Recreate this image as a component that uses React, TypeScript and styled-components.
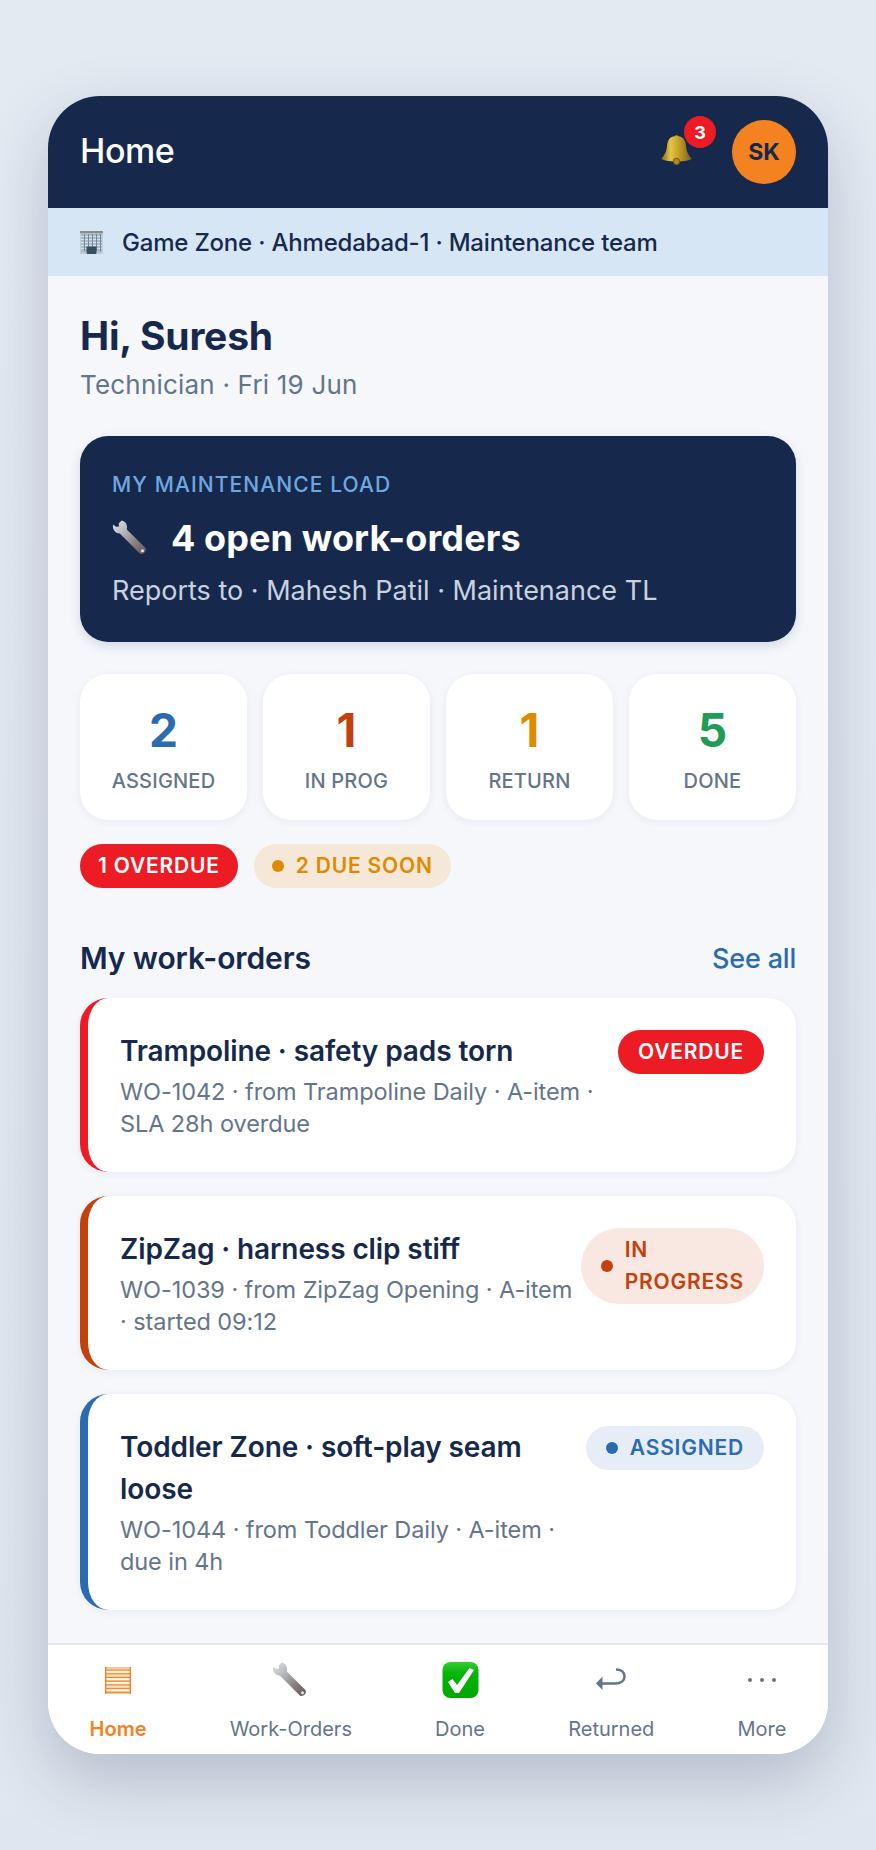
import React from "react"
import styled, { createGlobalStyle } from "styled-components"

const navy = "#16294d"
const slate = "#64748b"
const orange = "#f58220"
const red = "#ed1c24"
const blue = "#2b6cb0"
const rust = "#c2410c"
const amber = "#e08a00"
const green = "#1f9d55"

const GlobalStyle = createGlobalStyle`
  html, body {
    margin: 0;
    padding: 0;
  }

  body {
    background: #e2e8f0;
    font-family: Inter, "Noto Sans", sans-serif;
    color: ${navy};
  }
`

// Icons
const WrenchIcon = ({ id }: { id: string }) => (
  <svg width="37" height="36" viewBox="0 0 37 36">
    <defs>
      <linearGradient id={id} x1="0" y1="0" x2="1" y2="1">
        <stop offset="0" stopColor="#dfe3e8" />
        <stop offset="0.35" stopColor="#b4b5ba" />
        <stop offset="0.7" stopColor="#85797a" />
        <stop offset="1" stopColor="#6a5656" />
      </linearGradient>
    </defs>
    <path
      d="M9.7 0.5 L6.8 3.2 L7 6.5 L4 6.8 L1 4.5 C0.3 9 2.5 13.2 7.8 13.6 L27.5 33.2 C30.5 36 36 31 33.2 27.8 L14.8 9.5 C15.8 5 14 1.5 9.7 0.5Z"
      fill={`url(#${id})`}
    />
    <circle cx="30.5" cy="30.7" r="1.5" fill="#e8e8e8" />
  </svg>
)

const BellIcon = () => (
  <svg width="31" height="31" viewBox="0 0 31 31">
    <defs>
      <linearGradient id="bell" x1="0" y1="0" x2="1" y2="0">
        <stop offset="0" stopColor="#8a6a12" />
        <stop offset="0.3" stopColor="#e3c445" />
        <stop offset="0.55" stopColor="#c9a42c" />
        <stop offset="1" stopColor="#7d5f10" />
      </linearGradient>
    </defs>
    <circle cx="15.5" cy="2" r="2" fill="#a8861f" />
    <path
      d="M15.5 1 C9 1 6.5 5 6 11 C5.5 17 3.5 20 0.5 23.5 C0 25 7 26.5 15.5 26.5 C24 26.5 31 25 30.5 23.5 C27.5 20 25.5 17 25 11 C24.5 5 22 1 15.5 1Z"
      fill="url(#bell)"
    />
    <circle cx="15.5" cy="26.5" r="3.2" fill="#b08a20" stroke="#6e5410" />
  </svg>
)

const BuildingIcon = () => (
  <svg width="23" height="23" viewBox="0 0 23 23">
    <rect x="0" y="0" width="23" height="2.4" fill="#8f8b88" />
    <rect x="0.5" y="2.4" width="22" height="20.6" fill="#a8bccb" />
    {[5, 8, 11, 14, 17].map(y => (
      <rect key={y} x="1" y={y} width="21" height="1" fill="#dbe3e8" />
    ))}
    {[4, 8, 12, 16, 20].map(x => (
      <rect key={x} x={x} y="3" width="1" height="17" fill="#6f8798" />
    ))}
    <rect x="6.5" y="15.5" width="10" height="7.5" fill="#37505f" />
    <rect x="0.5" y="21.5" width="6" height="1.5" fill="#c9cdd0" />
    <rect x="16.5" y="21.5" width="6" height="1.5" fill="#c9cdd0" />
  </svg>
)

const CheckIcon = () => (
  <svg width="37" height="36" viewBox="0 0 36 36">
    <defs>
      <linearGradient id="check" x1="0" y1="0" x2="0" y2="1">
        <stop offset="0" stopColor="#35cc35" />
        <stop offset="0.3" stopColor="#08b408" />
        <stop offset="1" stopColor="#00a800" />
      </linearGradient>
    </defs>
    <rect width="36" height="36" rx="8" fill="url(#check)" />
    <path d="M5.5 20 L10 17 L14.5 23 L27 6 L31.5 8 L16.5 31 L12.5 31Z" fill="#fff" />
  </svg>
)

const HomeGlyph = () => (
  <svg width="26" height="27" viewBox="0 0 26 27">
    <rect x="0" y="0" width="26" height="27" fill="#fbc89a" />
    {[3, 6.7, 10.4, 14.1, 17.8, 21.5].map(y => (
      <rect key={y} x="1" y={y} width="24" height="2.7" fill="#fff" opacity={y === 6.7 || y === 17.8 ? 0.45 : 0.95} />
    ))}
    {[2.6, 6.3, 10, 13.7, 17.4, 21.1, 24.8].map(y => (
      <rect key={y} x="0" y={y} width="26" height="1.1" fill={orange} />
    ))}
    <rect x="0" y="0" width="1.4" height="27" fill={orange} />
    <rect x="24.6" y="0" width="1.4" height="27" fill={orange} />
  </svg>
)

const ReturnIcon = () => (
  <svg width="30" height="24" viewBox="0 0 30 24">
    <path d="M0 15.5 L6.5 8.5 V22 Z" fill={slate} />
    <path d="M5 15.5 H19 C25 15.5 28.5 12.5 28.5 8.5 C28.5 4 25 1.5 20 1.5" fill="none" stroke={slate} strokeWidth="2.6" />
  </svg>
)

const DotsIcon = () => (
  <svg width="30" height="6" viewBox="0 0 30 6">
    <circle cx="3" cy="3" r="2" fill={slate} />
    <circle cx="15" cy="3" r="2" fill={slate} />
    <circle cx="27" cy="3" r="2" fill={slate} />
  </svg>
)

// Data
const stats = [
  { value: "2", label: "ASSIGNED", color: blue },
  { value: "1", label: "IN PROG", color: rust },
  { value: "1", label: "RETURN", color: amber },
  { value: "5", label: "DONE", color: green },
]

const tabs = [
  { label: "Home", icon: <HomeGlyph />, active: true },
  { label: "Work-Orders", icon: <WrenchIcon id="tab-wrench" /> },
  { label: "Done", icon: <CheckIcon /> },
  { label: "Returned", icon: <ReturnIcon /> },
  { label: "More", icon: <DotsIcon /> },
]

const App: React.FC = () => {
  return (
    <Page>
      <GlobalStyle />
      <Phone>
        <Header>
          <HeaderTitle>Home</HeaderTitle>
          <HeaderActions>
            <BellWrap>
              <BellIcon />
              <Badge>3</Badge>
            </BellWrap>
            <Avatar>SK</Avatar>
          </HeaderActions>
        </Header>

        <ContextBar>
          <BuildingIcon />
          <span>Game Zone · Ahmedabad-1 · Maintenance team</span>
        </ContextBar>

        <Content>
          <Greeting>Hi, Suresh</Greeting>
          <Subtitle>Technician · Fri 19 Jun</Subtitle>

          <Hero>
            <HeroLabel>MY MAINTENANCE LOAD</HeroLabel>
            <HeroTitle>
              <WrenchIcon id="hero-wrench" />
              <span>4 open work-orders</span>
            </HeroTitle>
            <HeroMeta>Reports to · Mahesh Patil · Maintenance TL</HeroMeta>
          </Hero>

          <StatGrid>
            {stats.map(stat => (
              <StatCard key={stat.label}>
                <StatValue $color={stat.color}>{stat.value}</StatValue>
                <StatLabel>{stat.label}</StatLabel>
              </StatCard>
            ))}
          </StatGrid>

          <ChipRow>
            <Pill $bg={red} $fg="#fff">1 OVERDUE</Pill>
            <Pill $bg="#f5e8d8" $fg={amber}>
              <Dot />2 DUE SOON
            </Pill>
          </ChipRow>

          <SectionHead>
            <SectionTitle>My work-orders</SectionTitle>
            <SeeAll>See all</SeeAll>
          </SectionHead>

          <OrderList>
            <OrderCard $accent={red}>
              <OrderBody>
                <OrderTitle>Trampoline · safety pads torn</OrderTitle>
                <OrderMeta>
                  WO-1042 · from Trampoline Daily · A-item ·<br />
                  SLA 28h overdue
                </OrderMeta>
              </OrderBody>
              <Pill $bg={red} $fg="#fff">OVERDUE</Pill>
            </OrderCard>

            <OrderCard $accent={rust}>
              <OrderBody>
                <OrderTitle>ZipZag · harness clip stiff</OrderTitle>
                <OrderMeta>
                  WO-1039 · from ZipZag Opening · A-item<br />
                  · started 09:12
                </OrderMeta>
              </OrderBody>
              <Pill $bg="#f9e7e1" $fg={rust}>
                <Dot />
                <span>
                  IN<br />
                  PROGRESS
                </span>
              </Pill>
            </OrderCard>

            <OrderCard $accent={blue}>
              <OrderBody>
                <OrderTitle>
                  Toddler Zone · soft-play seam<br />
                  loose
                </OrderTitle>
                <OrderMeta>
                  WO-1044 · from Toddler Daily · A-item ·<br />
                  due in 4h
                </OrderMeta>
              </OrderBody>
              <Pill $bg="#e6edf6" $fg={blue}>
                <Dot />ASSIGNED
              </Pill>
            </OrderCard>
          </OrderList>
        </Content>

        <TabBar>
          {tabs.map(tab => (
            <Tab key={tab.label} $active={tab.active}>
              <TabIcon>{tab.icon}</TabIcon>
              <span>{tab.label}</span>
            </Tab>
          ))}
        </TabBar>
      </Phone>
    </Page>
  )
}

const Page = styled.div`
  display: flex;
  justify-content: center;
  box-sizing: border-box;
  height: 1850px;
  padding-top: 96px;
  background: linear-gradient(180deg, #e4eaf2 0%, #dfe6ef 100%);
  overflow: hidden;
`

const Phone = styled.div`
  display: flex;
  flex-direction: column;
  width: 780px;
  height: 1658px;
  border-radius: 52px;
  overflow: hidden;
  background: #f5f7fb;
  box-shadow: 0 24px 64px rgba(22, 41, 77, 0.22);
`

const Header = styled.header`
  display: flex;
  justify-content: space-between;
  align-items: center;
  height: 112px;
  padding: 0 32px;
  background: ${navy};
`

const HeaderTitle = styled.h1`
  margin: 0 0 4px;
  font-size: 34px;
  font-weight: 500;
  letter-spacing: -0.4px;
  color: #fff;
`

const HeaderActions = styled.div`
  display: flex;
  align-items: center;
  gap: 40px;
`

const BellWrap = styled.div`
  position: relative;
  display: flex;
  width: 31px;
  height: 31px;
  margin-bottom: 3px;
`

const Badge = styled.span`
  position: absolute;
  top: -19px;
  right: -24px;
  display: flex;
  justify-content: center;
  align-items: center;
  width: 32px;
  height: 32px;
  border-radius: 50%;
  background: ${red};
  color: #fff;
  font-size: 18px;
  font-weight: 700;
`

const Avatar = styled.div`
  display: flex;
  justify-content: center;
  align-items: center;
  width: 64px;
  height: 64px;
  border-radius: 50%;
  background: ${orange};
  color: ${navy};
  font-size: 23px;
  font-weight: 700;
`

const ContextBar = styled.div`
  display: flex;
  align-items: center;
  gap: 19px;
  height: 68px;
  padding: 0 32px;
  background: #d6e6f5;
  font-size: 24px;
  font-weight: 500;
  letter-spacing: -0.2px;
`

const Content = styled.main`
  flex: 1;
  padding: 36px 32px 32px;
`

const Greeting = styled.h2`
  margin: 0;
  font-size: 39px;
  line-height: 48px;
  font-weight: 700;
  letter-spacing: -0.2px;
`

const Subtitle = styled.p`
  margin: 7px 0 0;
  font-size: 26px;
  line-height: 36px;
  color: ${slate};
  letter-spacing: 0.2px;
`

const Hero = styled.section`
  margin-top: 33px;
  padding: 36px 32px;
  height: 206px;
  box-sizing: border-box;
  border-radius: 28px;
  background: ${navy};
  box-shadow: 0 4px 12px rgba(22, 41, 77, 0.14);
`

const HeroLabel = styled.div`
  font-size: 21px;
  line-height: 26px;
  font-weight: 500;
  letter-spacing: 1.1px;
  color: #6fa8e0;
`

const HeroTitle = styled.div`
  display: flex;
  align-items: center;
  gap: 22px;
  margin-top: 18px;
  font-size: 36px;
  line-height: 44px;
  font-weight: 700;
  letter-spacing: 0.1px;
  color: #fff;
`

const HeroMeta = styled.div`
  margin-top: 13px;
  font-size: 27px;
  line-height: 36px;
  color: #c9d2e0;
`

const StatGrid = styled.div`
  display: grid;
  grid-template-columns: repeat(4, 1fr);
  gap: 16px;
  margin-top: 32px;
`

const StatCard = styled.div`
  display: flex;
  flex-direction: column;
  align-items: center;
  height: 146px;
  padding-top: 28px;
  box-sizing: border-box;
  border-radius: 28px;
  background: #fff;
  box-shadow: 0 2px 8px rgba(22, 41, 77, 0.06);
`

const StatValue = styled.div<{ $color: string }>`
  font-size: 46px;
  line-height: 56px;
  font-weight: 700;
  color: ${p => p.$color};
`

const StatLabel = styled.div`
  margin-top: 10px;
  font-size: 20px;
  line-height: 26px;
  font-weight: 500;
  letter-spacing: 0.2px;
  color: ${slate};
`

const ChipRow = styled.div`
  display: flex;
  gap: 16px;
  margin-top: 24px;
`

const Pill = styled.span<{ $bg: string; $fg: string }>`
  display: inline-flex;
  align-items: center;
  flex-shrink: 0;
  align-self: flex-start;
  gap: 12px;
  padding: 6px 18px;
  border-radius: 40px;
  background: ${p => p.$bg};
  color: ${p => p.$fg};
  font-size: 21px;
  line-height: 32px;
  font-weight: 600;
  letter-spacing: 0.8px;
`

const Dot = styled.i`
  flex-shrink: 0;
  width: 12px;
  height: 12px;
  border-radius: 50%;
  background: currentColor;
`

const SectionHead = styled.div`
  display: flex;
  justify-content: space-between;
  align-items: center;
  margin-top: 51px;
`

const SectionTitle = styled.h3`
  margin: 0;
  font-size: 30px;
  line-height: 38px;
  font-weight: 600;
  letter-spacing: -0.1px;
`

const SeeAll = styled.a`
  font-size: 27px;
  font-weight: 500;
  letter-spacing: -0.2px;
  color: ${blue};
`

const OrderList = styled.div`
  display: flex;
  flex-direction: column;
  gap: 24px;
  margin-top: 21px;
`

const OrderCard = styled.article<{ $accent: string }>`
  display: flex;
  justify-content: space-between;
  align-items: flex-start;
  gap: 8px;
  padding: 32px;
  border-left: 8px solid ${p => p.$accent};
  border-radius: 28px;
  background: #fff;
  box-shadow: 0 2px 8px rgba(22, 41, 77, 0.06);

  ${Pill} {
    padding: 6px 20px;
  }
`

const OrderBody = styled.div`
  min-width: 0;
  white-space: nowrap;
`

const OrderTitle = styled.div`
  font-size: 28px;
  line-height: 42px;
  font-weight: 600;
  letter-spacing: -0.1px;
`

const OrderMeta = styled.div`
  margin-top: 4px;
  font-size: 23.5px;
  line-height: 32px;
  letter-spacing: -0.08px;
  color: ${slate};
`

const TabBar = styled.nav`
  display: flex;
  justify-content: space-around;
  height: 111px;
  box-sizing: border-box;
  padding-top: 16px;
  border-top: 2px solid #e4e9f1;
  background: #fff;
`

const Tab = styled.a<{ $active?: boolean }>`
  display: flex;
  flex-direction: column;
  align-items: center;
  gap: 17px;
  font-size: 20px;
  line-height: 26px;
  font-weight: ${p => (p.$active ? 600 : 400)};
  color: ${p => (p.$active ? orange : slate)};
`

const TabIcon = styled.div`
  display: flex;
  justify-content: center;
  align-items: center;
  height: 38px;
`

export default App
